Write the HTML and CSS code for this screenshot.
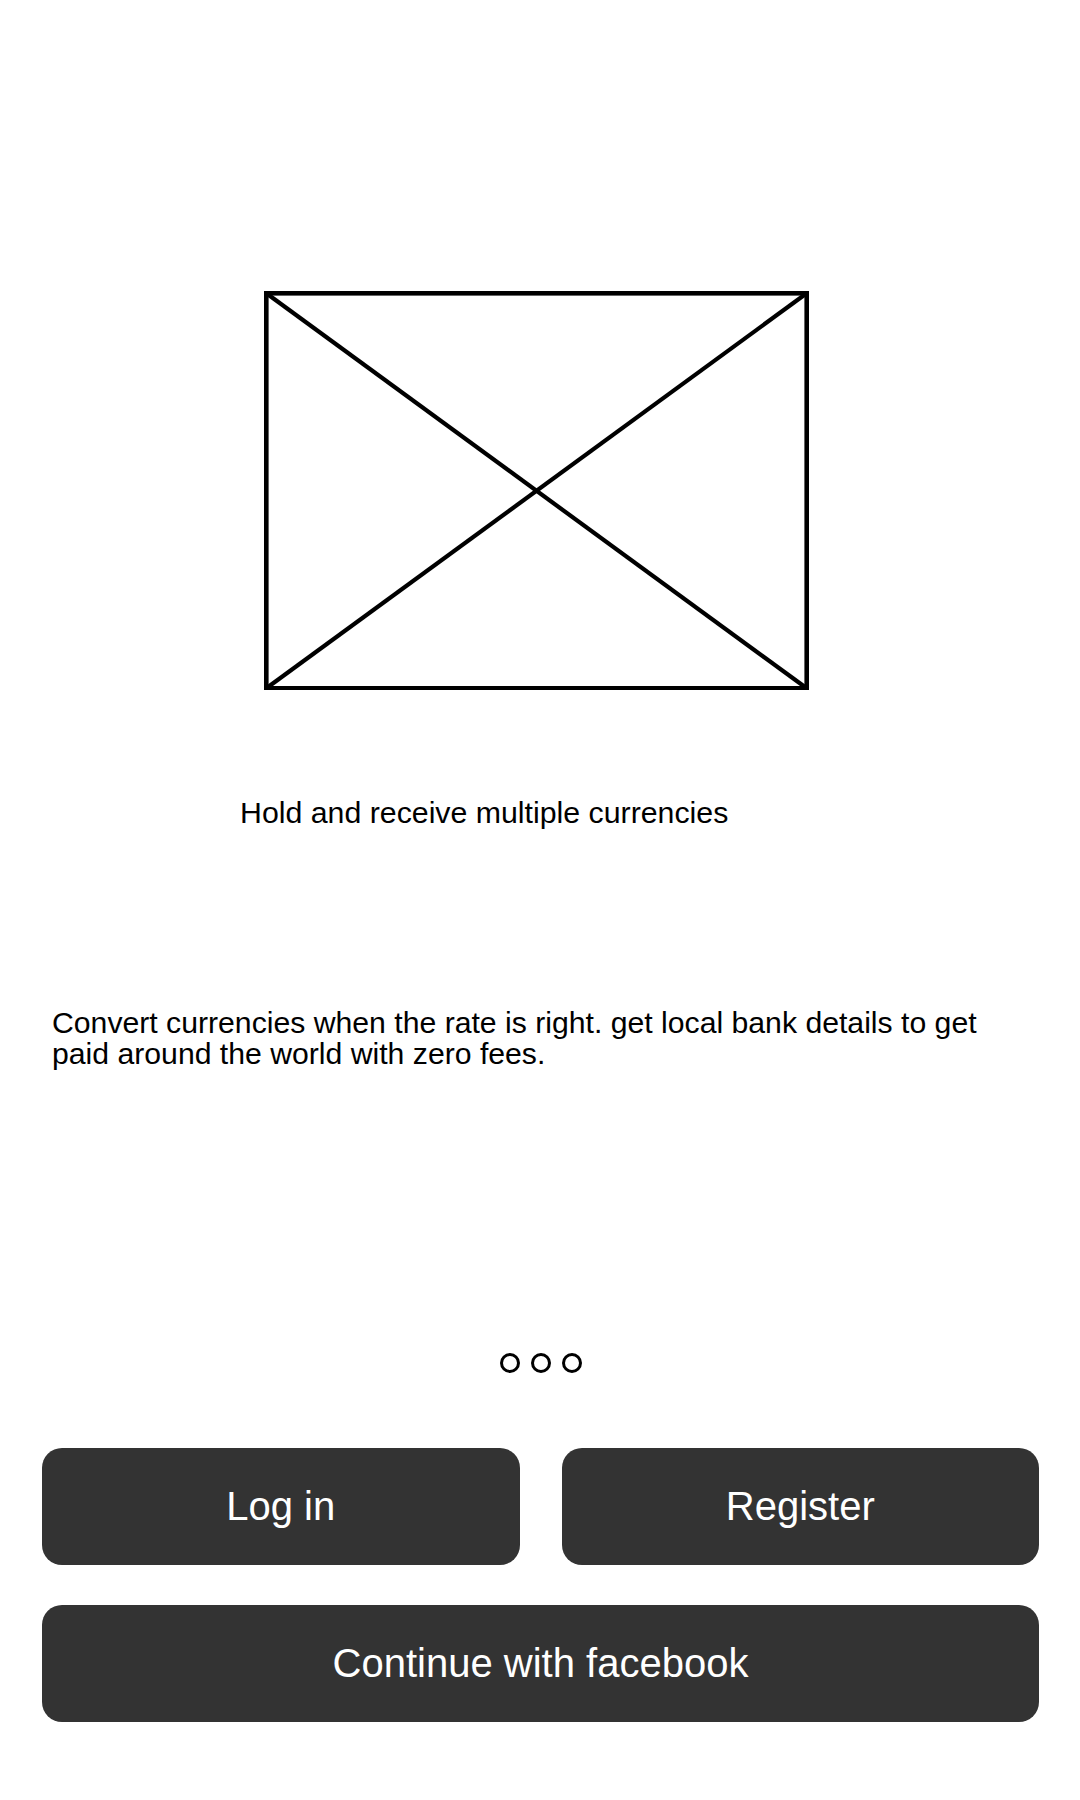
FILE: index.html
```html
<!DOCTYPE html>
<html lang="en">
<head>
<meta charset="utf-8">
<title>Onboarding</title>
<link rel="stylesheet" href="styles.css">
</head>
<body>
<main class="screen">
  <svg class="illustration" width="545" height="399" viewBox="0 0 545 399" aria-hidden="true">
    <rect x="2.3" y="2.3" width="540.4" height="395" fill="none" stroke="#000" stroke-width="4.6"/>
    <line x1="2.3" y1="2.3" x2="542.7" y2="397.3" stroke="#000" stroke-width="4.2"/>
    <line x1="542.7" y1="2.3" x2="2.3" y2="397.3" stroke="#000" stroke-width="4.2"/>
  </svg>
  <h1 class="title">Hold and receive multiple currencies</h1>
  <p class="desc">Convert currencies when the rate is right. get local bank details to get paid around the world with zero fees.</p>
  <div class="dots">
    <span class="dot"></span><span class="dot"></span><span class="dot"></span>
  </div>
  <div class="actions">
    <div class="row">
      <button class="btn">Log in</button>
      <button class="btn">Register</button>
    </div>
    <button class="btn btn-wide">Continue with facebook</button>
  </div>
</main>
</body>
</html>
```
FILE: styles.css
```css
html, body {
  margin: 0;
  padding: 0;
  background: #ffffff;
}
body {
  font-family: "Liberation Sans", Arial, sans-serif;
  color: #000;
}
.screen {
  width: 1080px;
  height: 1800px;
  overflow: hidden;
}
.illustration {
  display: block;
  margin: 291px 0 0 264px;
}
.title {
  margin: 106px 0 0 0;
  padding-left: 240px;
  font-weight: normal;
  font-size: 30.3px;
  line-height: 34px;
  white-space: nowrap;
}
.desc {
  margin: 177px 0 0 0;
  padding: 0 52px;
  font-size: 30.2px;
  line-height: 31px;
}
.dots {
  margin-top: 284px;
  padding-left: 2px;
  display: flex;
  justify-content: center;
  gap: 11px;
}
.dot {
  width: 20px;
  height: 20px;
  box-sizing: border-box;
  border: 3px solid #000;
  border-radius: 50%;
}
.actions {
  margin-top: 75px;
  padding: 0 41px 0 42px;
  display: flex;
  flex-direction: column;
  gap: 40px;
}
.row {
  display: flex;
  gap: 42px;
}
.btn {
  flex: 1;
  height: 117px;
  border: none;
  border-radius: 20px;
  background: #333333;
  color: #ffffff;
  font-family: "Liberation Sans", Arial, sans-serif;
  font-size: 40px;
  padding: 0;
}
.btn-wide {
  flex: none;
  width: 100%;
}
```
